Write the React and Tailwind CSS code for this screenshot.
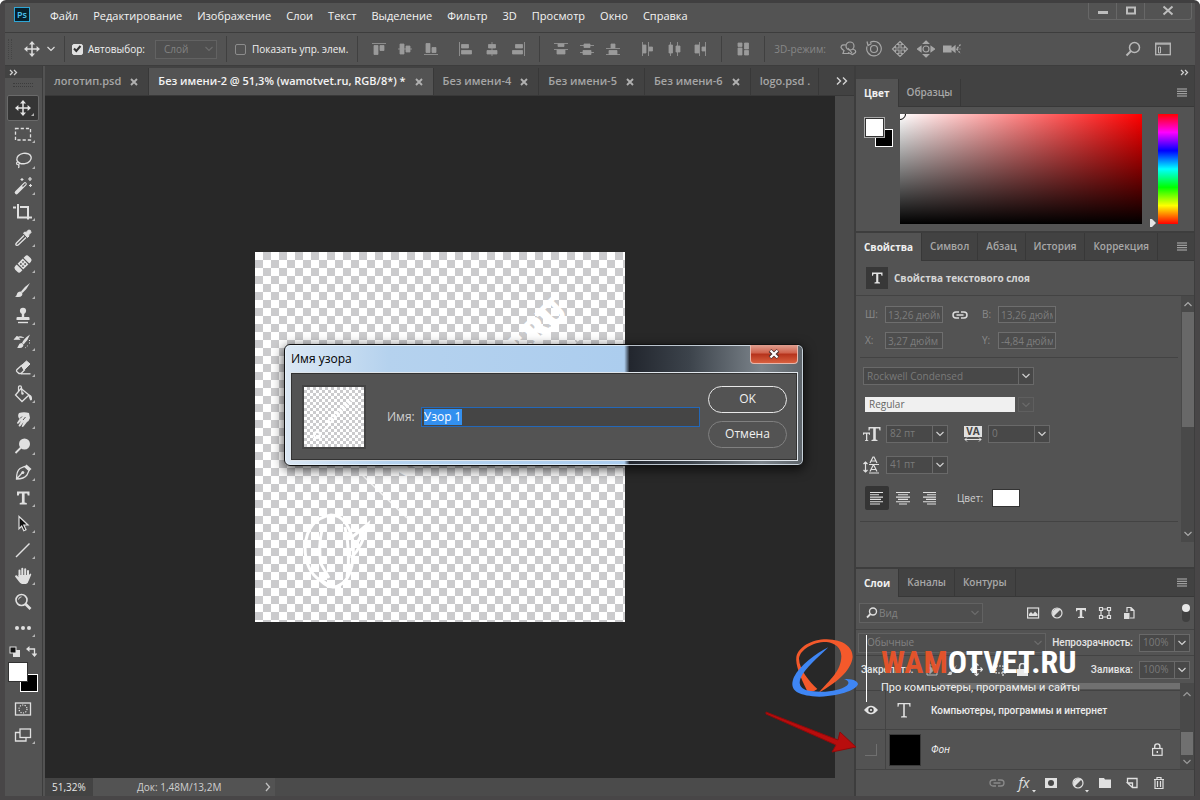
import React from "react";

const Svg = ({ s = 20, w, h, className = "", children, vb }) => (
  <svg
    width={w || s}
    height={h || s}
    viewBox={vb || `0 0 ${w || s} ${h || s}`}
    className={`shrink-0 ${className}`}
    fill="none"
    stroke="none"
    aria-hidden="true"
  >
    {children}
  </svg>
);

const Chevron = ({ className = "" }) => (
  <Svg w={10} h={8} className={className}>
    <path d="M1.5 2 L5 5.5 L8.5 2" stroke="currentColor" strokeWidth="1.2" />
  </Svg>
);

const MoveGlyph = () => (
  <Svg s={20}>
    <path d="M10 3v14M3 10h14" stroke="currentColor" strokeWidth="1.5" />
    <path
      d="M10 2l3 3.4H7zM10 18l3-3.4H7zM2 10l3.4-3v6zM18 10l-3.4-3v6z"
      fill="currentColor"
    />
  </Svg>
);

const tools = [
  { name: "Перемещение", icon: <MoveGlyph /> },
  {
    name: "Прямоугольная область",
    icon: (
      <Svg>
        <rect x="2.5" y="4.5" width="15" height="11.5" stroke="currentColor" strokeWidth="1.3" strokeDasharray="3.2 2" />
      </Svg>
    ),
  },
  {
    name: "Лассо",
    icon: (
      <Svg>
        <ellipse cx="11" cy="8.5" rx="7.3" ry="5.2" stroke="currentColor" strokeWidth="1.4" transform="rotate(-10 11 8.5)" />
        <path d="M5 12c-2 0-2 2.500 0 2.500s2-2.500 0-2.500M5 14.500c1.500 1 1 2.500.5 3.500" stroke="currentColor" strokeWidth="1.200" />
      </Svg>
    ),
  },
  {
    name: "Волшебная палочка",
    icon: (
      <Svg>
        <path d="M3.500 16.500L12 8" stroke="currentColor" strokeWidth="3.600" strokeLinecap="round" />
        <path d="M9.500 10.500l3-3" stroke="#535353" strokeWidth="1.300" />
        <path d="M9 2v3M7.500 3.500h3M17 1v4M15 3h4M17.500 8v3M16 9.500h3" stroke="currentColor" strokeWidth="1.200" />
      </Svg>
    ),
  },
  {
    name: "Рамка",
    icon: (
      <Svg>
        <path d="M0 5.500h3M5 2v13.500h9M7 5h8v12.500M16 15.500h3" stroke="currentColor" strokeWidth="2" />
      </Svg>
    ),
  },
  {
    name: "Пипетка",
    icon: (
      <Svg>
        <path d="M10.500 5l1.500-1 1 .5L15.500 2q2.500-.5 2.500 2.500L15.500 7l.5 1-1.500 1.500z" fill="currentColor" stroke="currentColor" />
        <path d="M11 7.500l-7.500 7.500q-1.500 2 .2 2.300 1 .2 2-.8L13 9.500" stroke="currentColor" strokeWidth="1.300" />
      </Svg>
    ),
  },
  {
    name: "Восстанавливающая кисть",
    icon: (
      <Svg>
        <g transform="rotate(-45 10 10)">
          <rect x="0.500" y="6" width="19" height="8" rx="2.500" fill="currentColor" />
          <path d="M5.800 5.500v9M14.200 5.500v9" stroke="#535353" strokeWidth="1.200" />
          <circle cx="8.500" cy="8.500" r=".9" fill="#535353" />
          <circle cx="11.500" cy="8.500" r=".9" fill="#535353" />
          <circle cx="8.500" cy="11.500" r=".9" fill="#535353" />
          <circle cx="11.500" cy="11.500" r=".9" fill="#535353" />
        </g>
      </Svg>
    ),
  },
  {
    name: "Кисть",
    icon: (
      <Svg>
        <path d="M17 3q-6 4-9 8.500l1.500 1.500Q14 9 17 3z" fill="currentColor" />
        <path d="M7.500 11.500q-3 0-3.500 2.500-.5 2-2 2.500 5 1.500 7-1 1-1.500-.2-3.200z" fill="currentColor" />
      </Svg>
    ),
  },
  {
    name: "Штамп",
    icon: (
      <Svg>
        <circle cx="10" cy="4.800" r="3.100" fill="currentColor" />
        <path d="M8.800 7h2.400v4h4.300q1 0 1 1v2h-13v-2q0-1 1-1h4.300z" fill="currentColor" />
        <path d="M5 16.500h10" stroke="currentColor" strokeWidth="1.400" />
      </Svg>
    ),
  },
  {
    name: "Архивная кисть",
    icon: (
      <Svg>
        <path d="M17 2.500q-6 4-8 8.500l1.500 1.500Q15 8.500 17 2.500z" fill="currentColor" />
        <path d="M8.500 11q-2.500 0-3 2.500-.5 1.500-1.500 2 4 1.500 6-1 1-1.500-.2-2.500z" fill="currentColor" />
        <path d="M1 7.500L4 4l3 3.500zM4 5.500q3-2 7 .2" stroke="currentColor" fill="currentColor" strokeWidth=".6" />
        <path d="M16.500 8v4.500M15 13.500l-3.500 3" stroke="currentColor" strokeDasharray="1 1.500" />
      </Svg>
    ),
  },
  {
    name: "Ластик",
    icon: (
      <Svg>
        <path d="M8.500 7.500l5-4.500 3.500 3-6 6z" fill="currentColor" stroke="currentColor" strokeLinejoin="round" />
        <path d="M8.500 7.500l-4.700 4.300q-.8 1.200.2 2L6 15.500h2l3.500-3.500z" stroke="currentColor" strokeWidth="1.300" />
        <path d="M8 15.800h9.500" stroke="currentColor" strokeWidth="1.300" />
      </Svg>
    ),
  },
  {
    name: "Заливка",
    icon: (
      <Svg>
        <path d="M8 4.500l8 6.500-7 6.500L2.500 11z" stroke="currentColor" strokeWidth="1.300" />
        <path d="M5.500 7V3.500q0-1.700 1.500-1.700t1.500 1.700L9 9" stroke="currentColor" strokeWidth="1.200" />
        <circle cx="9.500" cy="9.500" r="1.200" fill="currentColor" />
        <path d="M15 10.500q3.500 0 4 3v2q-1.300 2-2.200 0z" fill="currentColor" />
      </Svg>
    ),
  },
  {
    name: "Палец",
    icon: (
      <Svg>
        <path d="M6 3q5-1.500 10 0l1 5q-1 3-3 4l-3.500 4.500q-1.500 1-1.800-.3L10.500 12l-3 4q-1.500 1.200-2-.2L8 11l-2.500 2.500q-1.500.7-1.500-.8L6.500 9Q4 6 6 3z" fill="currentColor" />
        <path d="M7 8.500l2-2M10 10l2.500-3" stroke="#535353" />
      </Svg>
    ),
  },
  {
    name: "Осветлитель",
    icon: (
      <Svg>
        <circle cx="11.500" cy="8" r="5.500" fill="currentColor" />
        <path d="M8 11.500l-5.500 5.500" stroke="currentColor" strokeWidth="1.800" />
      </Svg>
    ),
  },
  {
    name: "Перо",
    icon: (
      <Svg>
        <path d="M3.500 17Q3.500 9 7 6.500l4.500-2 4.500 4-2 4.500Q11 17 3.500 17zM3.500 17l6-6.500" stroke="currentColor" strokeWidth="1.300" />
        <path d="M11.500 4.500l2-2 5 4.500-2.200 2z" fill="currentColor" />
        <circle cx="9.800" cy="10.500" r="1.500" fill="currentColor" />
      </Svg>
    ),
  },
  {
    name: "Текст",
    icon: (
      <Svg>
        <path d="M4 3.500h12.500v4h-1.800l-.5-2h-2.600v9l2.200.5v1.500H6.700V15l2.200-.5v-9H6.300l-.5 2H4z" fill="currentColor" />
      </Svg>
    ),
  },
  {
    name: "Выделение контура",
    icon: (
      <Svg>
        <path d="M6 2.500l9 8.500h-4.200l2.200 4.800-2.200 1-2.100-4.800L6 14.800z" fill="#111" stroke="currentColor" strokeWidth="1.200" />
      </Svg>
    ),
  },
  {
    name: "Линия",
    icon: (
      <Svg>
        <path d="M3 17L16.500 3.500" stroke="currentColor" strokeWidth="1.500" />
      </Svg>
    ),
  },
  {
    name: "Рука",
    icon: (
      <Svg>
        <path d="M6.500 10V4.500M9.300 9V2.800M12.200 9V3.200M15 10V5" stroke="currentColor" strokeWidth="2" strokeLinecap="round" />
        <path d="M5.500 9H16l1.200-1.500q1.300.3 1 1.300L16 14q-1 3.500-3 4H9q-1.500 0-3.500-3L2 10.500q.5-1.700 2-.9l1.500 1.700z" fill="currentColor" />
      </Svg>
    ),
  },
  {
    name: "Масштаб",
    flat: true,
    icon: (
      <Svg>
        <circle cx="8.500" cy="8" r="5.500" stroke="currentColor" strokeWidth="1.600" />
        <path d="M5.500 7.500q.5-2.500 3-2.700" stroke="currentColor" />
        <path d="M12.500 12l5 5" stroke="currentColor" strokeWidth="2.600" />
      </Svg>
    ),
  },
  {
    name: "Изменить панель",
    icon: (
      <Svg>
        <circle cx="4" cy="10" r="2" fill="currentColor" />
        <circle cx="10" cy="10" r="2" fill="currentColor" />
        <circle cx="16" cy="10" r="2" fill="currentColor" />
      </Svg>
    ),
  },
];

const alignIcons = {
  top: <path d="M1 2.500h14M3 4.500h4v9H3zM9 4.500h4v5H9z" />,
  vmid: <path d="M1 8h14M3 3h4v10H3zM9 5h4v6H9z" />,
  bottom: <path d="M1 13.500h14M3 2.500h4v9H3zM9 6.500h4v5H9z" />,
  left: <path d="M1.500 1v14M3.500 3.500h7v3.500h-7zM3.500 9.500h10v3.500h-10z" />,
  hmid: <path d="M8 1v14M4.500 3.500h7v3.500h-7zM3 9.500h10v3.500H3z" />,
  right: <path d="M14.500 1v14M5.500 3.500h7v3.500h-7zM2.500 9.500h10v3.500h-10z" />,
  dtop: <path d="M1 2.500h14M1 8.500h14M5 3h6v2.500H5zM4 9h8v4H4z" />,
  dv: <path d="M1 4.500h14M1 11.500h14M5 3h6v3.500H5zM4 9.500h8v4H4z" />,
  dbot: <path d="M1 7.500h14M1 13.500h14M6 3h4v4H6zM4 9.500h8v4H4z" />,
  dleft: <path d="M2.500 1v14M8.500 1v14M3 4h3v8H3zM9 6h3.500v4H9z" />,
  dh: <path d="M4.500 1v14M11.500 1v14M3 4h3.500v8H3zM10 5h4v6h-4z" />,
  dright: <path d="M7.500 1v14M13.500 1v14M3 4h4v8H3zM10 6h3.500v4H10z" />,
  auto: <path d="M3 2h4v3.500H3zM3 7h4v7H3zM9.500 2h4v6h-4zM9.500 9.500h4V14h-4z" />,
};

const OptButton = ({ kind, label }) => (
  <button type="button" aria-label={label} className="flex h-6 w-[26px] items-center justify-center text-[#9a9a9a]">
    <Svg s={16}>
      <g fill="currentColor" stroke="currentColor" strokeWidth=".8">
        {alignIcons[kind]}
      </g>
    </Svg>
  </button>
);

const Sep = ({ className = "" }) => <div className={`h-[26px] w-px shrink-0 bg-[#404040] ${className}`} />;

const Check = ({ id, checked, label }) => (
  <div className="flex shrink-0 items-center gap-[5px]">
    <span className="relative flex size-3 items-center justify-center">
      <input
        id={id}
        type="checkbox"
        defaultChecked={checked}
        className="peer size-[11px] appearance-none rounded-[2px] border border-[#8c8c8c] checked:border-[#e0e0e0] checked:bg-[#e0e0e0]"
      />
      <svg viewBox="0 0 12 12" className="pointer-events-none absolute hidden size-3 peer-checked:block" fill="none" stroke="#333" strokeWidth="2" aria-hidden="true">
        <path d="M3 5.500L5.300 8L9.500 3" />
      </svg>
    </span>
    <label htmlFor={id} className="text-[10px] whitespace-nowrap text-[#f0f0f0]">
      {label}
    </label>
  </div>
);

const Burger = () => (
  <button type="button" aria-label="Меню панели" className="ml-auto flex w-6 items-center justify-center text-[#b4b4b4]">
    <Svg w={10} h={9}>
      <path d="M0 1h10M0 3.300h10M0 5.700h10M0 8h10" stroke="currentColor" />
    </Svg>
  </button>
);

const PanelTabs = ({ items }) => (
  <div className="flex h-[28px] border-b border-[#383838] bg-[#424242]" role="tablist">
    {items.map((t, i) => (
      <button
        key={t}
        type="button"
        role="tab"
        aria-selected={i === 0}
        className={
          i === 0
            ? "-mb-px border-r border-[#383838] bg-[#535353] px-2 text-[10px] font-bold whitespace-nowrap text-[#f0f0f0]"
            : "border-r border-[#383838] px-2 text-[10px] font-semibold whitespace-nowrap text-[#a8a8a8]"
        }
      >
        {t}
      </button>
    ))}
    <Burger />
  </div>
);

const Select = ({ label, value, className = "", chevron = "text-[#6c6c6c]" }) => (
  <span className={`relative flex items-center ${className}`}>
    <select
      aria-label={label}
      defaultValue={value}
      className="h-full w-full appearance-none border border-[#626262] bg-[#4f4f4f] px-1 text-[10px] text-[#828282]"
    >
      <option>{value}</option>
    </select>
    <Chevron className={`pointer-events-none absolute right-[3px] ${chevron}`} />
  </span>
);

const Combo = ({ label, value, id, inputClass = "w-[47px]", h = "h-[18px]" }) => (
  <span className={`flex ${h}`}>
    <input
      id={id}
      aria-label={label}
      defaultValue={value}
      className={`${inputClass} min-w-0 border border-[#696969] bg-[#484848] px-[3px] text-[10px] text-[#7a7a7a]`}
    />
    <button type="button" aria-label={`${label}: список`} className="-ml-px flex w-4 items-center justify-center border border-[#696969] bg-[#484848] text-[#d0d0d0]">
      <Chevron />
    </button>
  </span>
);

const Field = ({ id, label, value, lw = "w-5" }) => (
  <span className="flex items-center">
    <label htmlFor={id} className={`${lw} text-[10px] text-[#8a8a8a]`}>
      {label}
    </label>
    <input id={id} defaultValue={value} className="h-[17px] w-[58px] border border-[#6e6e6e] bg-[#4d4d4d] px-[2px] text-[10px] text-[#7d7d7d]" />
  </span>
);

const DocTab = ({ title, active, close = true }) => (
  <div
    className={
      active
        ? "flex shrink-0 items-center border-r border-[#383838] bg-[#535353] pr-2 pl-[9px]"
        : "flex shrink-0 items-center border-r border-[#383838] pr-2 pl-[9px]"
    }
  >
    <button type="button" className={active ? "text-[11px] font-semibold whitespace-nowrap text-[#f4f4f4]" : "text-[11px] font-semibold whitespace-nowrap text-[#a6a6a6]"}>
      {title}
    </button>
    {close && (
      <button type="button" aria-label={`Закрыть ${title}`} className="ml-[7px] flex size-3 items-center justify-center text-[#b0b0b0]">
        <Svg s={8}>
          <path d="M1 1l6 6M7 1L1 7" stroke="currentColor" strokeWidth="1.900" />
        </Svg>
      </button>
    )}
  </div>
);

const checker = "bg-[conic-gradient(#cbcbcd_25%,#fff_0_50%,#cbcbcd_0_75%,#fff_0)]";

function MenuBar() {
  const items = ["Файл", "Редактирование", "Изображение", "Слои", "Текст", "Выделение", "Фильтр", "3D", "Просмотр", "Окно", "Справка"];
  return (
    <header className="flex h-[29px] pl-[9px]">
      <span className="mt-1 mr-5 flex h-[15px] w-4 items-center justify-center border border-[#2fa6d6] bg-[#06202c] text-[9px] leading-none font-semibold text-[#4cc4ee]">Ps</span>
      <nav className="flex gap-[15px] pb-[3px]">
        {items.map((m) => (
          <button key={m} type="button" className="text-[11px] whitespace-nowrap text-[#f4f4f4]">
            {m}
          </button>
        ))}
      </nav>
      <div className="mr-[3px] ml-auto flex h-[17px] self-start rounded-b-[3px] border border-t-0 border-[#676767] text-[#bdbdbd]">
        <button type="button" aria-label="Свернуть" className="flex w-7 items-center justify-center border-r border-[#676767]">
          <Svg s={12}>
            <rect x="1" y="6" width="10" height="3" fill="currentColor" />
          </Svg>
        </button>
        <button type="button" aria-label="Развернуть" className="flex w-7 items-center justify-center border-r border-[#676767]">
          <Svg s={12}>
            <rect x="2" y="2.500" width="8" height="6" stroke="currentColor" strokeWidth="2" />
          </Svg>
        </button>
        <button type="button" aria-label="Закрыть" className="flex w-[46px] items-center justify-center">
          <Svg s={12}>
            <path d="M1.500 1.500l9 8M10.500 1.500l-9 8" stroke="currentColor" strokeWidth="2" />
          </Svg>
        </button>
      </div>
    </header>
  );
}

function OptionsBar() {
  const three = [
    <g key="a"><circle cx="11" cy="6" r="4" /><path d="M7 5q-5-1-5 2.500 1 2 3 3l-1 3h6M13.500 9q4 1 3 3.500l-3 2-4.500-2M9 8l4 5" /></g>,
    <g key="b"><circle cx="9" cy="9" r="3.500" /><path d="M5 2.500A7.300 7.300 0 1 1 2 6.500M2 1.500l1 4 3.500-2" /></g>,
    <g key="c"><path d="M9 1.500l3 3h-2v3.500h3.500V6l3 3-3 3v-2H10v3.500h2l-3 3-3-3h2V10H4.500v2l-3-3 3-3v2H8V4.500H6z" /></g>,
    <g key="d"><circle cx="9" cy="9" r="3" /><path fill="currentColor" d="M9 1l2.500 2.500h-5zM9 17l2.500-2.500h-5zM.5 9L4 6.500v5zM17.500 9L14 6.500v5z" /></g>,
    <g key="e"><path fill="currentColor" d="M0 6h8v6H0zM9 8.500l3-2.500v6L9 9.500z" /><path d="M17.500 4.500L13.500 9l4 4.500M13.500 9h4" strokeDasharray="2 1" /></g>,
  ];
  return (
    <div className="flex h-[34px] items-center border-y border-[#3d3d3d] pl-[3px]">
      <div className="mr-[10px] h-5 w-1 shrink-0 border-x border-dotted border-[#444]" />
      <button type="button" aria-label="Инструмент перемещение" className="flex shrink-0 items-center gap-1 text-[#dcdcdc]">
        <MoveGlyph />
        <Chevron />
      </button>
      <Sep className="mr-[6px] ml-2" />
      <Check id="auto" checked label="Автовыбор:" />
      <Select label="Автовыбор" value="Слой" className="ml-[10px] h-[19px] w-[62px] shrink-0 [&>select]:pl-2" />
      <Sep className="mr-2 ml-[9px]" />
      <Check id="show" label="Показать упр. элем." />
      <Sep className="mr-2 ml-[9px]" />
      <OptButton kind="top" label="Верх" />
      <OptButton kind="vmid" label="Центр по вертикали" />
      <OptButton kind="bottom" label="Низ" />
      <div className="w-[9px]" />
      <OptButton kind="left" label="Левый край" />
      <OptButton kind="hmid" label="Центр по горизонтали" />
      <OptButton kind="right" label="Правый край" />
      <Sep className="mx-2" />
      <OptButton kind="dtop" label="Распределить верх" />
      <OptButton kind="dv" label="Распределить по вертикали" />
      <OptButton kind="dbot" label="Распределить низ" />
      <div className="w-[9px]" />
      <OptButton kind="dleft" label="Распределить слева" />
      <OptButton kind="dh" label="Распределить по горизонтали" />
      <OptButton kind="dright" label="Распределить справа" />
      <Sep className="mx-2" />
      <OptButton kind="auto" label="Автовыравнивание" />
      <Sep className="mr-[9px] ml-2" />
      <span className="mr-[9px] text-[10px] whitespace-nowrap text-[#878787]">3D-режим:</span>
      {three.map((g, i) => (
        <button key={i} type="button" aria-label={`3D ${i + 1}`} className="flex h-6 w-[26px] items-center justify-center text-[#a6a6a6]">
          <Svg s={18}>
            <g stroke="currentColor" strokeWidth="1.200">{g}</g>
          </Svg>
        </button>
      ))}
      <div className="mr-6 ml-auto flex gap-[14px] text-[#b8b8b8]">
        <button type="button" aria-label="Поиск">
          <Svg s={16}>
            <circle cx="9.500" cy="6.500" r="5" stroke="currentColor" strokeWidth="1.500" />
            <path d="M6 10l-4.500 4.500" stroke="currentColor" strokeWidth="2" />
          </Svg>
        </button>
        <button type="button" aria-label="Рабочая среда">
          <Svg s={16}>
            <rect x=".7" y="2.200" width="14.600" height="11.500" stroke="currentColor" strokeWidth="1.300" />
            <path d="M.5 3.200h15M3.500 6h2v6h-2z" stroke="currentColor" />
          </Svg>
        </button>
      </div>
    </div>
  );
}

function Toolbar() {
  return (
    <aside className="flex w-[38px] shrink-0 flex-col border-r border-[#3d3d3d]">
      <div className="flex h-[12px] w-full items-center bg-[#424242] pl-1 text-[#d0d0d0]">
        <Svg w={9} h={7}>
          <path d="M1 1l2.500 2.500L1 6M5 1l2.500 2.500L5 6" stroke="currentColor" strokeWidth="1.300" />
        </Svg>
      </div>
      <div className="flex flex-col items-center pr-px">
        <div className="mt-[5px] mb-2 h-1 w-5 border-y border-dotted border-[#3c3c3c]" />
        {tools.map((t, i) => (
          <button
            key={t.name}
            type="button"
            aria-label={t.name}
            className={
              i === 0
                ? "relative flex h-[26px] w-8 shrink-0 items-center justify-center rounded-[2px] border border-[#6a6a6a] bg-[#353535] text-[#e4e4e4]"
                : "relative flex h-[26px] w-8 shrink-0 items-center justify-center text-[#e0e0e0]"
            }
          >
            {t.icon}
            {!t.flat && <span className="absolute right-1 bottom-1 size-0 border-b-[3px] border-l-[3px] border-b-[#b4b4b4] border-l-transparent" />}
          </button>
        ))}
        <div className="mt-[5px] flex w-7 justify-between text-[#e0e0e0]">
          <Svg s={11}>
            <rect x="4" y="4" width="7" height="7" fill="currentColor" />
            <rect x="1" y="1" width="6" height="6" fill="#111" stroke="currentColor" />
          </Svg>
          <Svg s={11}>
            <path d="M2 3h6.500v6" stroke="currentColor" strokeWidth="1.300" />
            <path d="M0 3l3.500-3v6zM8.500 11L5.500 7.500h6z" fill="currentColor" />
          </Svg>
        </div>
        <div className="relative mt-[5px] h-[30px] w-[30px]">
          <button type="button" aria-label="Цвет фона" className="absolute right-0 bottom-0 size-[18px] border border-white bg-black" />
          <button type="button" aria-label="Основной цвет" className="absolute top-0 left-0 size-5 border border-[#333] bg-white" />
        </div>
        <button type="button" aria-label="Быстрая маска" className="mt-1 flex h-[26px] w-8 items-center justify-center text-[#e0e0e0]">
          <Svg s={20}>
            <rect x="2.500" y="4" width="15" height="12" stroke="currentColor" strokeWidth="1.300" />
            <circle cx="10" cy="10" r="4" stroke="currentColor" strokeWidth="1.200" strokeDasharray="1.200 1.300" />
          </Svg>
        </button>
        <button type="button" aria-label="Режим экрана" className="relative flex h-[26px] w-8 items-center justify-center text-[#e0e0e0]">
          <Svg s={20}>
            <path d="M7 7.500H2.500V16h10.500v-3" stroke="currentColor" strokeWidth="1.300" />
            <rect x="7" y="4" width="10.500" height="8.500" stroke="currentColor" strokeWidth="1.300" />
          </Svg>
          <span className="absolute right-1 bottom-1 size-0 border-b-[3px] border-l-[3px] border-b-[#b4b4b4] border-l-transparent" />
        </button>
      </div>
    </aside>
  );
}

function Artboard() {
  return (
    <svg width="370" height="370" viewBox="0 0 370 370" className="size-full" fill="none" stroke="#fff" aria-hidden="true">
      <text x="313" y="61" textAnchor="end" transform="rotate(-45 313 61)" fontFamily="DejaVu Serif Condensed, DejaVu Serif" fontSize="30" fontWeight="bold" fill="#fff" strokeWidth="3">
        WAMOTVET.RU
      </text>
      <path d="M76 263q-24 4-26 32 0 24 16 34 12 12 24 0 10-12 8-40-6-26-22-26z" strokeWidth="3" />
      <path d="M67 278q-4 16-1 34l8 14M90 275q6 28 2 50M96 286l17-14q-5 22-17 34M92 300q10-4 17-24M64 325q10 12 22 10" strokeWidth="3" />
      <path d="M104 220l48 46" strokeWidth="1.500" opacity=".8" />
      <path d="M316 95l5-5M322 89l4-4" strokeWidth="2" />
    </svg>
  );
}

function DocumentArea() {
  return (
    <main className="flex min-w-0 flex-1 flex-col pl-[2px]">
      <div className="flex h-[30px] border-b border-[#383838] bg-[#424242]">
        <div className="flex min-w-0 flex-1 overflow-hidden pt-[2px]">
          <DocTab title="логотип.psd" />
          <DocTab title="Без имени-2 @ 51,3% (wamotvet.ru, RGB/8*) *" active />
          <DocTab title="Без имени-4" />
          <DocTab title="Без имени-5" />
          <DocTab title="Без имени-6" />
          <DocTab title="logo.psd ." close={false} />
        </div>
        <button type="button" aria-label="Другие вкладки" className="mr-[6px] ml-1 text-[#d4d4d4]">
          <Svg w={12} h={10}>
            <path d="M1 1.500L4.500 5 1 8.500M7 1.500L10.500 5 7 8.500" stroke="currentColor" strokeWidth="1.400" />
          </Svg>
        </button>
      </div>
      <div className="flex flex-1">
        <div className="flex flex-1 items-center justify-center bg-[#282828]">
          <div className={`size-[370px] ${checker} bg-[length:16px_16px]`}>
            <Artboard />
          </div>
        </div>
        <div className="w-[19px] bg-[#4b4b4b]" />
      </div>
      <footer className="flex h-[18px] items-center bg-[#535353] text-[10px]">
        <span className="flex h-full w-12 items-center bg-[#434343] pl-[7px] text-[#e6e6e6]">51,32%</span>
        <span className="ml-11 text-[#cfcfcf]">Док: 1,48M/13,2M</span>
        <button type="button" aria-label="Сведения" className="ml-11 text-[#c0c0c0]">
          <Svg w={6} h={10}>
            <path d="M1 1l3.500 4L1 9" stroke="currentColor" strokeWidth="1.300" />
          </Svg>
        </button>
        <span className="ml-1 h-full flex-1 bg-[#4b4b4b]" />
      </footer>
    </main>
  );
}

function ColorPanel() {
  return (
    <section>
      <PanelTabs items={["Цвет", "Образцы"]} />
      <div className="flex h-[124px] pt-[7px] pr-[16px] pl-2">
        <div className="relative mt-[3px] mr-[7px] h-[30px] w-[29px] shrink-0">
          <button type="button" aria-label="Фон" className="absolute right-0 bottom-0 size-[18px] border border-white bg-black" />
          <button type="button" aria-label="Передний план" className="absolute top-0 left-0 size-[21px] border border-[#aaa] bg-white outline-1 -outline-offset-2 outline-[#333]" />
        </div>
        <div className="relative h-[110px] flex-1 overflow-hidden bg-[linear-gradient(to_top,#000,transparent),linear-gradient(to_right,#fff,#f00)]">
          <span className="absolute -top-[6px] -left-[6px] size-3 rounded-full border border-black" />
        </div>
        <div className="flex w-4 items-end justify-end self-start pt-[104px] pr-[1px]">
          <Svg w={8} h={10}>
            <path d="M1 1h2l4 4-4 4H1z" fill="#e4e4e4" />
          </Svg>
        </div>
        <div className="h-[110px] w-5 bg-[linear-gradient(#f00,#f0f,#00f,#0ff,#0f0,#ff0,#f00)]" />
      </div>
    </section>
  );
}

const Lines = ({ d }) => (
  <Svg s={16}>
    <path d={d} stroke="currentColor" strokeWidth="1.100" />
  </Svg>
);

function PropertiesPanel() {
  return (
    <section className="border-t-2 border-[#3d3d3d]">
      <PanelTabs items={["Свойства", "Символ", "Абзац", "История", "Коррекция"]} />
      <div className="flex h-[35px] items-center gap-[6px] border-b border-[#434343] pl-[10px]">
        <span className="flex size-[22px] items-center justify-center bg-[#383838] text-[#e4e4e4]">
          <Svg s={16}>
            <path d="M3 2.500h10.500v3.300h-1l-.5-1.800H9.300v8l1.700.4v1.100H5.500v-1.100L7.200 12V4H4.500L4 5.800H3z" fill="currentColor" />
          </Svg>
        </span>
        <h2 className="text-[10px] font-bold text-[#d6d6d6]">Свойства текстового слоя</h2>
      </div>
      <div className="flex h-[271px]">
        <div className="flex flex-1 flex-col">
          <div className="ml-1 flex flex-col gap-[9px] border-b border-[#434343] pt-[10px] pb-2 pl-[5px]">
            <div className="flex items-center">
              <Field id="pw" label="Ш:" value="13,26 дюйм" />
              <button type="button" aria-label="Связать" className="mr-[14px] ml-[9px] text-[#dcdcdc]">
                <Svg w={16} h={10}>
                  <path d="M7 8H4a3 3 0 0 1 0-6h3M9 2h3a3 3 0 0 1 0 6H9M4.500 5h7" stroke="currentColor" strokeWidth="1.500" />
                </Svg>
              </button>
              <Field id="ph" label="В:" value="13,26 дюйм" lw="w-4" />
            </div>
            <div className="flex items-center gap-[39px]">
              <Field id="px" label="X:" value="3,27 дюйм" />
              <Field id="py" label="Y:" value="-4,84 дюйм" lw="w-4" />
            </div>
          </div>
          <div className="flex flex-col gap-3 pt-[9px] pl-[7px]">
            <Combo label="Шрифт" value="Rockwell Condensed" inputClass="w-[156px]" />
            <div className="flex h-[15px] gap-[3px] pl-[2px]">
              <input aria-label="Начертание" defaultValue="Regular" className="w-[150px] bg-[#f0f0f0] px-1 text-[10px] text-[#666]" />
              <span className="flex w-4 items-center justify-center border border-[#5f5f5f] text-[#6a6a6a]">
                <Chevron />
              </span>
            </div>
            <div className="flex h-[19px] items-center">
              <Svg w={18} h={16} className="mr-[5px] text-[#e0e0e0]">
                <path d="M5.500 1h12v3.500h-1L16 2.500h-3.200v11l1.700.5v1h-6v-1l1.700-.5v-11H7L6.500 4.500h-1zM0 6.500h7v2.200H6l-.3-1H4.300V14l1 .3v.7H2v-.7l1-.3V7.700H1.300l-.3 1H0z" fill="currentColor" />
              </Svg>
              <Combo label="Кегль" value="82 пт" />
              <span className="mr-[6px] ml-4 flex w-[18px] flex-col items-center">
                <span className="w-full bg-[#e0e0e0] text-center text-[10px] leading-[11px] font-bold text-[#444]">VA</span>
                <Svg w={18} h={5}>
                  <path d="M1 2.500h16M3 .5L1 2.500l2 2M15 .5l2 2-2 2" stroke="#e0e0e0" />
                </Svg>
              </span>
              <Combo label="Трекинг" value="0" />
            </div>
            <div className="flex h-[19px] items-center">
              <Svg w={18} h={18} className="mr-[5px] text-[#e0e0e0]">
                <path d="M2.500 6v10M.5 8l2-2 2 2M.5 14l2 2 2-2M6 8.500h10M6 17h10" stroke="currentColor" strokeWidth="1.200" />
                <path d="M7 7l3-6h1l3 6M8 5h5M7 15.500l3-6h1l3 6M8 13.500h5" stroke="currentColor" strokeWidth="1.200" />
              </Svg>
              <Combo label="Интерлиньяж" value="41 пт" />
            </div>
            <div className="flex items-center pl-[2px] text-[#e0e0e0]">
              <button type="button" aria-label="По левому краю" className="flex size-6 items-center justify-center rounded-[2px] bg-[#353535]">
                <Lines d="M1 2.500h13M1 4.800h9M1 7.100h13M1 9.400h11M1 11.700h13M1 14h10" />
              </button>
              <button type="button" aria-label="По центру" className="flex h-6 w-7 items-center justify-center">
                <Lines d="M1 2.500h14M3 4.800h10M1 7.100h14M3 9.400h10M1 11.700h14M4 14h8" />
              </button>
              <button type="button" aria-label="По правому краю" className="flex size-6 items-center justify-center">
                <Lines d="M2 2.500h13M6 4.800h9M2 7.100h13M5 9.400h10M2 11.700h13M6 14h9" />
              </button>
              <span className="ml-4 w-[35px] text-[10px] text-[#d0d0d0]">Цвет:</span>
              <button type="button" aria-label="Цвет текста" className="h-[18px] w-7 border border-[#333] bg-white" />
            </div>
          </div>
          <div className="mt-[11px] ml-1 h-px bg-[#434343]" />
        </div>
        <div className="ml-[3px] flex h-[246px] w-[13px] flex-col items-center bg-[#494949] text-[#aaa]">
          <Chevron className="mt-1 rotate-180" />
          <div className="mt-1 w-full flex-1">
            <div className="mx-auto h-[115px] w-3 bg-[#686868]" />
          </div>
          <Chevron className="mb-1" />
        </div>
      </div>
    </section>
  );
}

function LayersPanel() {
  const filters = [
    <g key="1"><rect x="1.600" y="2" width="11" height="10" stroke="currentColor" strokeWidth="1.200" /><path d="M3 10V8l2-2 2 2 2-2.500L11.500 8v2z" fill="currentColor" /></g>,
    <g key="2"><circle cx="7" cy="7" r="5" stroke="currentColor" strokeWidth="1.200" /><path d="M3.500 10.500A5 5 0 0 1 10.500 3.500z" fill="currentColor" /></g>,
    <path key="3" d="M2 2h10v3.200h-1L10.500 4H8.200v6.500L10 11v1H4v-1l1.800-.5V4H3.500L3 5.200H2z" fill="currentColor" />,
    <g key="4" stroke="currentColor" strokeWidth="1.200"><path d="M3 3h8v8H3z" /><path fill="#535353" d="M1.500 1.500h3v3h-3zM9.500 1.500h3v3h-3zM1.500 9.500h3v3h-3zM9.500 9.500h3v3h-3z" /></g>,
    <g key="5"><path d="M5 6V1.500h4L12 4.500V12H8M9 1.500v3h3" stroke="currentColor" strokeWidth="1.200" /><path d="M2 7h5.500v6H2z" fill="currentColor" /></g>,
  ];
  return (
    <section className="flex flex-1 flex-col border-t-2 border-[#3d3d3d]">
      <PanelTabs items={["Слои", "Каналы", "Контуры"]} />
      <div className="flex h-[33px] items-center border-b border-[#434343] pl-[3px]">
        <span className="relative">
          <Select label="Вид" value="Вид" className="h-5 w-[124px] [&>select]:pl-[19px]" />
          <Svg s={12} className="pointer-events-none absolute top-1 left-[7px] text-[#dedede]">
            <circle cx="7" cy="4.500" r="3.500" stroke="currentColor" strokeWidth="1.400" />
            <path d="M4.500 7L1 10.500" stroke="currentColor" strokeWidth="1.800" />
          </Svg>
        </span>
        <div className="ml-[43px] flex gap-[10px] text-[#dedede]">
          {filters.map((f, i) => (
            <button key={i} type="button" aria-label={`Фильтр слоёв ${i + 1}`}>
              <Svg s={14}>{f}</Svg>
            </button>
          ))}
        </div>
        <button type="button" aria-label="Включить фильтр" className="mr-[4px] ml-auto flex h-[18px] w-2 items-start rounded-full bg-[#404040]">
          <span className="size-2 rounded-full bg-[#e8e8e8]" />
        </button>
      </div>
      <div className="flex h-[26px] items-center border-b border-[#434343] pr-[4px] pl-[2px]">
        <Select label="Режим наложения" value="Обычные" className="h-5 min-w-0 flex-1 [&>select]:pl-2" />
        <label htmlFor="op" className="mx-[6px] font-['Roboto'] text-[10px] font-medium text-[#e4e4e4]">Непрозрачность:</label>
        <Combo id="op" label="Непрозрачность" value="100%" inputClass="w-9" />
      </div>
      <div className="flex h-[27px] items-center pr-[4px] pl-[5px]">
        <span className="font-['Roboto'] text-[10px] font-medium text-[#e4e4e4]">Закрепить:</span>
        <span className="ml-3 flex gap-2 text-[#d0d0d0]">
          <Svg s={12}><path d="M1 1h10v10H1zM3 3h2v2H3zM7 3h2v2H7zM5 5h2v2H5zM3 7h2v2H3z" stroke="currentColor" strokeWidth=".8" /></Svg>
          <Svg s={12}><path d="M11 1L5 7l1.500 1.500zM4.500 7.500q-2 0-2 2L1 11h4q1.500-1 1-2.500z" fill="currentColor" /></Svg>
        </span>
        <span className="ml-3 flex gap-[10px] text-[#e8e8e8]">
          <Svg s={13}><path d="M6.500 1v11M1 6.500h11M4.500 2.500l2-2 2 2M4.500 10.500l2 2 2-2M2.500 4.500l-2 2 2 2M10.500 4.500l2 2-2 2" stroke="currentColor" strokeWidth="1.200" /></Svg>
          <Svg s={13}><path d="M3 0v10h10M0 3h10v10" stroke="currentColor" strokeDasharray="2 1" strokeWidth="1.200" /></Svg>
          <Svg s={13}><path d="M1 6h11v7H1z" fill="currentColor" /><path d="M3.500 6V3.500a3 3 0 0 1 6 0V6" stroke="currentColor" strokeWidth="1.600" /></Svg>
        </span>
        <label htmlFor="fl" className="mr-[6px] ml-auto font-['Roboto'] text-[10px] font-medium text-[#e4e4e4]">Заливка:</label>
        <Combo id="fl" label="Заливка" value="100%" inputClass="w-9" />
      </div>
      <div className="flex flex-1 border-b border-[#434343]">
        <div className="flex-1">
          <div className="flex h-2 items-start border-b border-[#434343]">
            <div className="ml-[84px] h-[6px] flex-1 bg-[#707070]" />
          </div>
          <div className="flex h-[39px] items-center border-b border-[#434343]">
            <button type="button" aria-label="Видимость слоя" className="flex h-full w-[30px] items-center justify-center border-r border-[#434343] text-[#e4e4e4]">
              <Svg s={14}>
                <path d="M0 7q7-8.500 14 0-7 8.500-14 0z" fill="currentColor" />
                <circle cx="7" cy="7" r="2.700" fill="#444" />
                <circle cx="7" cy="7" r="1.100" fill="currentColor" />
              </Svg>
            </button>
            <span className="flex w-9 justify-center text-[#e0e0e0]">
              <Svg s={18}>
                <path d="M2.500 2h13v3.800h-1L14 3.300h-4.200V15l2.200.5v1H6v-1l2.200-.5V3.300H4l-.5 2.500h-1z" fill="currentColor" />
              </Svg>
            </span>
            <span className="ml-[9px] font-['Roboto'] text-[10px] font-medium text-[#ececec]">Компьютеры, программы и интернет</span>
          </div>
          <div className="flex h-[39px] items-center">
            <button type="button" aria-label="Показать слой" className="flex h-full w-[30px] items-center justify-center border-r border-[#434343]">
              <span className="size-3 border-r border-b border-[#707070]" />
            </button>
            <span className="ml-[3px] size-8 border border-[#3a3a3a] bg-black" />
            <span className="ml-[10px] text-[10px] font-medium text-[#f4f4f4] italic">Фон</span>
            <Svg s={13} className="mr-[16px] ml-auto text-[#e0e0e0]">
              <rect x="1.600" y="5.500" width="9.500" height="6.800" stroke="currentColor" strokeWidth="1.200" />
              <path d="M3.700 5.500V3.500a2.600 2.600 0 0 1 5.200 0v2M6.300 8v2" stroke="currentColor" strokeWidth="1.400" />
            </Svg>
          </div>
        </div>
        <div className="flex w-[14px] flex-col items-center bg-[#494949] text-[#9a9a9a]">
          <Chevron className="mt-[7px] rotate-180" />
          <div className="mt-auto h-[23px] w-3 bg-[#707070]" />
          <Chevron className="my-[3px]" />
        </div>
      </div>
      <div className="flex h-[26px] items-center justify-end gap-[11px] pr-[27px] text-[#e0e0e0]">
        <button type="button" aria-label="Связать слои" className="text-[#8a8a8a]">
          <Svg s={16}><path d="M7 11H4a3 3 0 0 1 0-6h3M9 5h3a3 3 0 0 1 0 6H9M4.500 8h7" stroke="currentColor" strokeWidth="1.300" /></Svg>
        </button>
        <button type="button" aria-label="Стиль слоя" className="relative w-4 text-[14px] leading-4 font-medium italic">
          fx
          <Svg w={4} h={3} className="absolute right-[-4px] bottom-[-2px]"><path d="M0 0h4L2 2.500z" fill="currentColor" /></Svg>
        </button>
        <button type="button" aria-label="Маска">
          <Svg s={16}><path d="M2 3h12v10H2z" fill="currentColor" /><circle cx="8" cy="8" r="3" fill="#474747" /></Svg>
        </button>
        <button type="button" aria-label="Корректирующий слой" className="relative">
          <Svg s={16}><circle cx="8" cy="8" r="5" stroke="currentColor" strokeWidth="1.200" /><path d="M4.500 11.500A5 5 0 0 1 11.500 4.500z" fill="currentColor" /></Svg>
          <Svg w={4} h={3} className="absolute right-[-3px] bottom-[-2px]"><path d="M0 0h4L2 2.500z" fill="currentColor" /></Svg>
        </button>
        <button type="button" aria-label="Группа">
          <Svg s={16}><path d="M2 3h5l1 1.500h6V13H2z" fill="currentColor" /></Svg>
        </button>
        <button type="button" aria-label="Новый слой">
          <Svg s={16}><path d="M3.500 8V3.500h9.500v9H8.500L3.500 8H8.500v4.500" stroke="currentColor" strokeWidth="1.300" /></Svg>
        </button>
        <button type="button" aria-label="Удалить">
          <Svg s={16}><path d="M3 4.500h10M6 4.500v-2h4v2M4 4.500v9h8v-9M6.500 6v6M9.500 6v6" stroke="currentColor" strokeWidth="1.200" /></Svg>
        </button>
      </div>
    </section>
  );
}

function PatternDialog() {
  return (
    <div
      role="dialog"
      aria-labelledby="dlg"
      className="absolute top-[341px] left-[284px] flex h-[122px] w-[520px] flex-col rounded-[6px] border border-[#111] bg-[linear-gradient(to_right,#dce8f4,#b5d2ee_20%,#accdee_65.5%,#22262e_66.5%,#3c434b_78%,#7b838a_92%,#5d646a)] px-[5px] pb-[4px] shadow-[0_3px_12px_rgba(0,0,0,0.75),inset_0_0_0_1px_rgba(235,245,255,0.75)]"
    >
      <div className="flex h-[27px] items-center">
        <h1 id="dlg" className="pl-px text-[12px] text-black">Имя узора</h1>
        <button type="button" aria-label="Закрыть окно" className="ml-auto flex h-[19px] w-12 items-center justify-center self-start rounded-b-[4px] border border-t-0 border-[#e7b7ac] bg-[linear-gradient(#df9f90,#cf604a_45%,#b5321b_50%,#d8603f)]">
          <Svg w={12} h={10}>
            <path d="M2 1.500l8 7M10 1.500l-8 7" stroke="#4a3030" strokeWidth="4" />
            <path d="M2.500 1.500l7 7M9.500 1.500l-7 7" stroke="#fff" strokeWidth="2.200" />
          </Svg>
        </button>
      </div>
      <div className="flex flex-1 items-center border border-[#e0e6ec] bg-[#535353] pr-[10px] pl-[11px] outline-1 -outline-offset-2 outline-[#333]">
        <div className="size-16 shrink-0 border-2 border-[#444]">
          <div className={`size-full ${checker} bg-[length:6px_6px]`}>
            <svg viewBox="0 0 60 60" className="size-full" fill="none" stroke="#fff" aria-hidden="true">
              <path d="M24 36L48 12" strokeWidth="4" strokeDasharray="3 1" />
              <circle cx="13" cy="48" r="3" strokeWidth="2" />
              <path d="M20 43l6-6" strokeWidth="2" />
            </svg>
          </div>
        </div>
        <label htmlFor="pname" className="mr-[6px] ml-[21px] text-[12px] text-[#d0d0d0]">Имя:</label>
        <div className="flex h-5 min-w-0 flex-1 items-center border border-[#2468b8] bg-[#454545] pl-[2px]">
          <input id="pname" defaultValue="Узор 1" className="h-4 w-[38px] bg-[#3390ef] text-[12px] leading-4 text-white outline-none" />
        </div>
        <div className="ml-2 flex w-[79px] flex-col gap-2">
          <button type="button" className="h-[27px] rounded-full border border-[#e8e8e8] text-[12px] text-[#f0f0f0]">OK</button>
          <button type="button" className="h-[27px] rounded-full border border-[#808080] text-[12px] text-[#f0f0f0]">Отмена</button>
        </div>
      </div>
    </div>
  );
}

function Watermark() {
  return (
    <div className="pointer-events-none absolute top-[632px] left-[790px] flex items-start">
      <svg width="76" height="64" viewBox="30 232 228 192" className="mt-[2px]" aria-hidden="true">
        <path fill="#f4592b" d="M82 395C60 350 46 315 49 292C55 262 95 239 140 239C190 240 218 262 218 292C214 335 165 372 116 399C150 360 183 335 184 290C184 264 165 250 140 247C100 246 60 270 57 297C58 330 88 365 112 388Q100 399 82 395Z" />
        <path fill="#3f86f4" d="M145 263C108 280 60 318 42 352C28 385 40 408 118 411C190 408 230 388 234 373C232 362 215 358 192 358C208 363 208 372 200 378C180 392 140 400 92 394C62 390 54 375 62 355C75 325 118 290 145 263Z" />
      </svg>
      <div className="h-[67px] w-px bg-white" />
      <div className="pt-[10px] pl-[14px] whitespace-nowrap">
        <div className="h-[34px] font-['Roboto_Condensed','DejaVu_Serif_Condensed',serif] text-[32px] leading-[34px] font-bold text-white">
          <span className="text-[#e2532b]">WAM</span>OTVET.RU
        </div>
        <div className="font-['Roboto'] text-[11px] leading-[18px] text-[#f0f0f0]">Про компьютеры, программы и сайты</div>
      </div>
    </div>
  );
}

export default function App() {
  return (
    <div className="relative flex min-h-screen w-full flex-col overflow-hidden rounded-t-[6px] border-t-[3px] border-[#403f40] bg-[#535353] font-['Open_Sans','Noto_Sans',sans-serif]">
      <div className="flex flex-1 flex-col border-x-[5px] border-b-[5px] border-[#484647]">
        <MenuBar />
        <OptionsBar />
        <div className="flex flex-1">
          <Toolbar />
          <DocumentArea />
          <div className="flex w-[341px] shrink-0 flex-col border-r border-l-2 border-[#3d3d3d]">
            <div className="flex h-[13px] items-center justify-end bg-[#424242] pr-[5px] text-[#d0d0d0]">
              <Svg w={9} h={7}>
                <path d="M1 1l2.500 2.500L1 6M5 1l2.500 2.500L5 6" stroke="currentColor" strokeWidth="1.300" />
              </Svg>
            </div>
            <ColorPanel />
            <PropertiesPanel />
            <LayersPanel />
          </div>
        </div>
      </div>
      <PatternDialog />
      <Watermark />
      <svg className="pointer-events-none absolute top-[702px] left-[760px]" width="100" height="54" viewBox="0 0 100 54" aria-hidden="true">
        <path d="M6 7L78 35L80 27L96 42L72 47L76 40L6 9Z" fill="#b80d0d" stroke="#8f0a0a" strokeWidth="1" />
      </svg>
    </div>
  );
}
